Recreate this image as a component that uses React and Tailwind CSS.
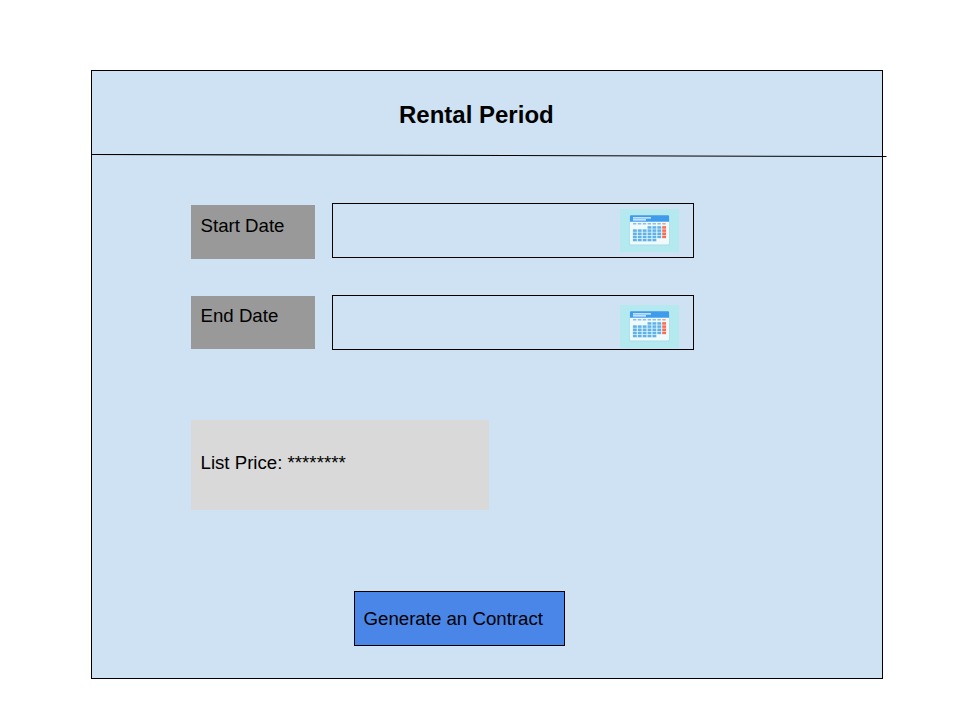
const COLUMNS = [0, 1, 2, 3, 4, 5, 6];
const ROWS = [0, 1, 2, 3, 4];

function hasDay(row, col) {
  if (row === 0) return col >= 3;
  if (row === 4) return col <= 4;
  return true;
}

function CalendarIcon({ className }) {
  return (
    <svg viewBox="0 0 59 43" className={"h-[43px] w-[59px] shrink-0 " + className} aria-label="Calendar">
      <rect width="59" height="43" fill="#b5e9f0" />
      <rect x="9.5" y="7" width="40" height="29.4" rx="0.8" fill="#a9dbe6" />
      <rect x="10" y="7" width="39" height="28.4" rx="0.8" fill="#f0f9fc" />
      <path d="M10.8 6.3h37.4q.8 0 .8.8v5.6H10V7.1q0-.8.8-.8z" fill="#3f9cea" />
      <path d="M13 8.9h18M13 10.9h13" stroke="#eef8ff" strokeWidth="1.3" />
      {COLUMNS.map((c) => (
        <rect key={c} x={13 + c * 4.88} y="14.2" width="3.4" height="1.2" fill={c === 6 ? "#ee8576" : "#64b5e8"} />
      ))}
      {ROWS.map((r) =>
        COLUMNS.filter((c) => hasDay(r, c)).map((c) => (
          <rect
            key={r + "-" + c}
            x={12.9 + c * 4.88}
            y={17.2 + r * 3.15}
            width="3.9"
            height="2.5"
            fill={c === 6 ? "#fb6b53" : "#5db3e8"}
          />
        ))
      )}
    </svg>
  );
}

function DateRow({ label, className, labelClass, iconClass }) {
  return (
    <div className={"flex items-start gap-[17px] " + className}>
      <div className={"w-[124px] shrink-0 bg-[#999999] pl-[9.5px] leading-[21px] " + labelClass}>{label}</div>
      <div className="flex h-[55px] w-[362px] shrink-0 justify-end border border-black pr-[14px]">
        <CalendarIcon className={iconClass} />
      </div>
    </div>
  );
}

export default function App() {
  return (
    <div className="h-[720px] w-[960px] overflow-hidden bg-white pl-[91px] pt-[70px] font-['Liberation_Sans',Arial,sans-serif] text-[18.67px] text-black">
      <main className="h-[609px] w-[792px] border border-black bg-[#cfe2f3]">
        <h1 className="h-[83px] pl-[307px] pt-[30px] text-[24px] font-bold leading-[28px]">Rental Period</h1>
        <svg viewBox="0 0 796 4" className="-ml-px block h-[4px] w-[796px] max-w-none">
          <path d="M0 .5L795.5 2.5" stroke="black" strokeWidth="1.1" />
        </svg>
        <div className="pl-[99px] pt-[45px]">
          <DateRow label="Start Date" className="" labelClass="mt-[2px] h-[54px] pt-[10px]" iconClass="mt-[5px]" />
          <DateRow label="End Date" className="mt-[36px]" labelClass="mt-[1px] h-[53px] pt-[9px]" iconClass="mt-[9px]" />
          <div className="mt-[70px] h-[90px] w-[298px] bg-[#d9d9d9] pl-[9.5px] pt-[32px] leading-[21px]">List Price: ********</div>
          <button className="ml-[163px] mt-[81px] block h-[55px] w-[211px] border border-black bg-[#4a86e8] pl-[8.5px] text-left leading-[21px]">
            Generate an Contract
          </button>
        </div>
      </main>
    </div>
  );
}
